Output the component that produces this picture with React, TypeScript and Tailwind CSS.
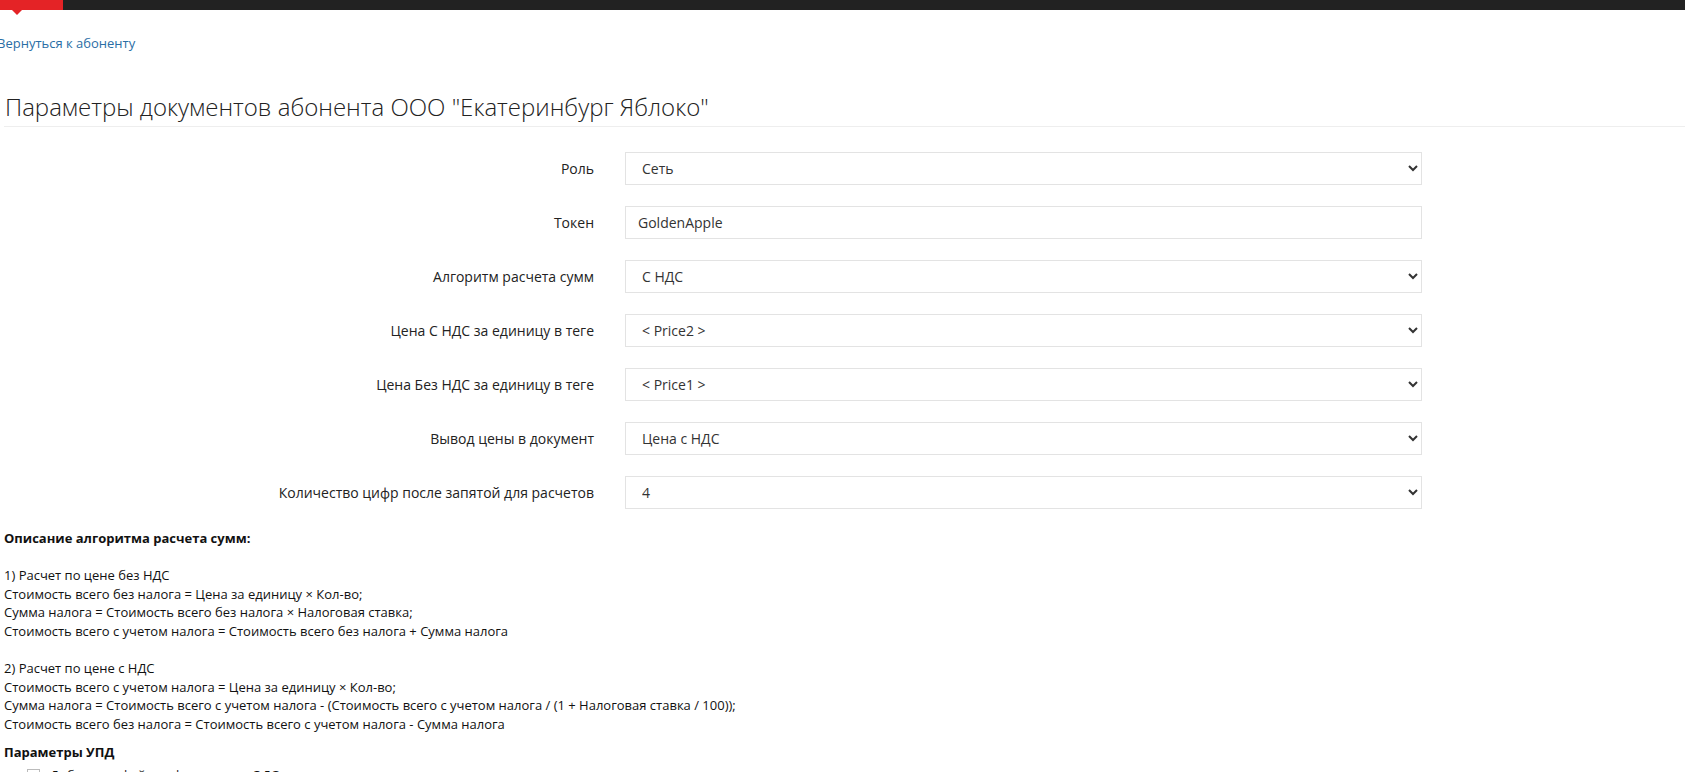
import React from "react";

const rows: { label: string; value: string; kind: "select" | "input" }[] = [
  { label: "Роль", value: "Сеть", kind: "select" },
  { label: "Токен", value: "GoldenApple", kind: "input" },
  { label: "Алгоритм расчета сумм", value: "С НДС", kind: "select" },
  { label: "Цена С НДС за единицу в теге", value: "< Price2 >", kind: "select" },
  { label: "Цена Без НДС за единицу в теге", value: "< Price1 >", kind: "select" },
  { label: "Вывод цены в документ", value: "Цена с НДС", kind: "select" },
  { label: "Количество цифр после запятой для расчетов", value: "4", kind: "select" },
];

const App = () => {
  return (
    <div className="min-h-[772px] bg-white font-['Open_Sans',sans-serif] text-[#222] overflow-hidden">
      <div className="flex h-[10px]">
        <div className="relative w-[63px] bg-[#e42326]">
          <span className="absolute left-[12px] top-[10px] h-0 w-0 border-x-[5px] border-t-[5px] border-x-transparent border-t-[#e42326]" />
        </div>
        <div className="flex-1 bg-[#222]" />
      </div>

      <a href="#" className="mt-[24px] ml-[-3px] block text-[13px] leading-[18px] text-[#2a6ea5]">
        Вернуться к абоненту
      </a>

      <div className="ml-[4px] mt-[38px] border-b border-[#eee] pb-[3px]">
        <h1 className="pl-[1px] text-[24px] font-light leading-[33px] text-[#222]">
          Параметры документов абонента ООО "Екатеринбург Яблоко"
        </h1>
      </div>

      <div className="mt-[25px] flex flex-col gap-[21px]">
        {rows.map((r) => (
          <div key={r.label} className="flex items-center">
            <label className="w-[594px] text-right text-[14px] text-[#222]">{r.label}</label>
            <div className="ml-[31px] w-[797px]">
              {r.kind === "select" ? (
                <select
                  defaultValue={r.value}
                  className="h-[33px] w-full border border-[#e3e3e3] bg-white pl-[12px] pr-[6px] text-[14px] text-[#333] outline-none"
                >
                  <option>{r.value}</option>
                </select>
              ) : (
                <input
                  defaultValue={r.value}
                  className="h-[33px] w-full border border-[#e3e3e3] bg-white px-[12px] text-[14px] text-[#333] outline-none"
                />
              )}
            </div>
          </div>
        ))}
      </div>

      <div className="mt-[20px] pl-[4px] text-[13px] leading-[18.6px] text-[#111]">
        <p className="font-bold">Описание алгоритма расчета сумм:</p>
        <br />
        <p>1) Расчет по цене без НДС</p>
        <p>Стоимость всего без налога = Цена за единицу × Кол-во;</p>
        <p>Сумма налога = Стоимость всего без налога × Налоговая ставка;</p>
        <p>Стоимость всего с учетом налога = Стоимость всего без налога + Сумма налога</p>
        <br />
        <p>2) Расчет по цене с НДС</p>
        <p>Стоимость всего с учетом налога = Цена за единицу × Кол-во;</p>
        <p>Сумма налога = Стоимость всего с учетом налога - (Стоимость всего с учетом налога / (1 + Налоговая ставка / 100));</p>
        <p>Стоимость всего без налога = Стоимость всего с учетом налога - Сумма налога</p>
        <p className="mt-[9px] font-bold">Параметры УПД</p>
        <label className="mt-[5px] flex items-center gap-[10px] pl-[23px]">
          <span className="h-[13px] w-[13px] border border-[#bbb] bg-white" />
          <span>Добавлять файл информации в ЭДО</span>
        </label>
      </div>
    </div>
  );
};

export default App;
